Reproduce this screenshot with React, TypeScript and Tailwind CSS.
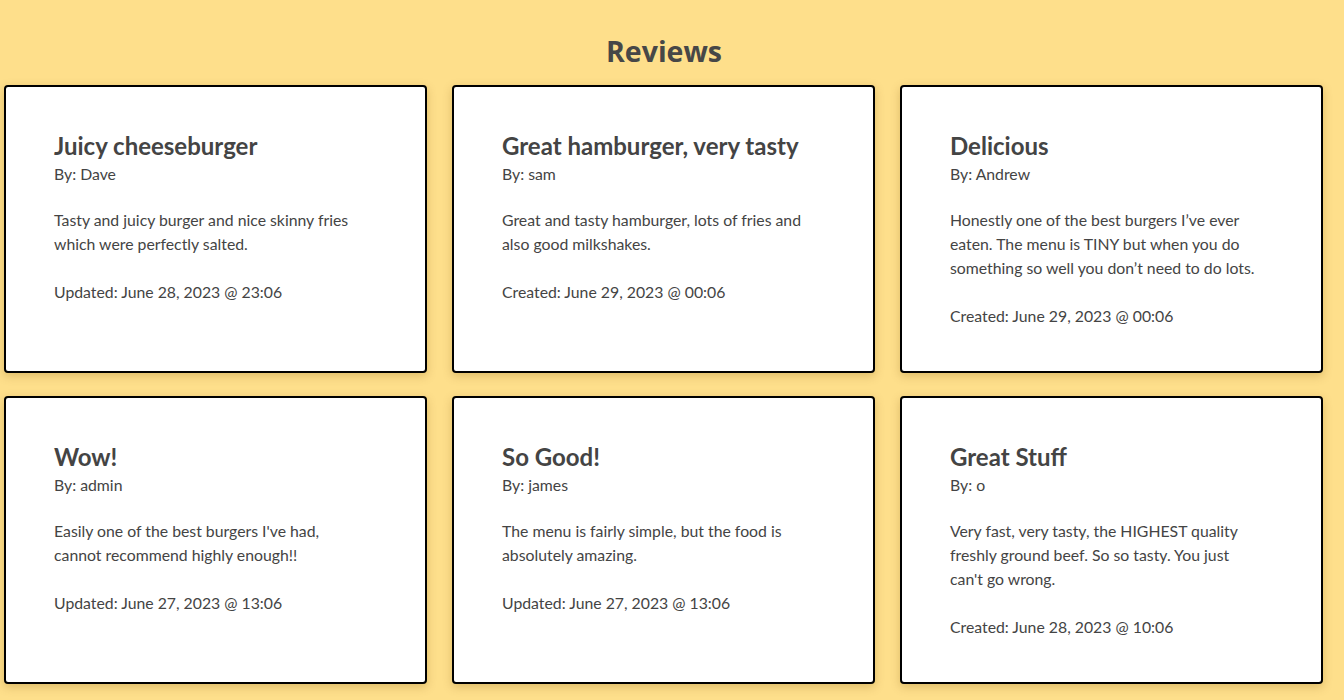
const reviews = [
  {
    title: "Juicy cheeseburger",
    author: "Dave",
    body: "Tasty and juicy burger and nice skinny fries which were perfectly salted.",
    stamp: "Updated: June 28, 2023 @ 23:06",
  },
  {
    title: "Great hamburger, very tasty",
    author: "sam",
    body: "Great and tasty hamburger, lots of fries and also good milkshakes.",
    stamp: "Created: June 29, 2023 @ 00:06",
  },
  {
    title: "Delicious",
    author: "Andrew",
    body: "Honestly one of the best burgers I’ve ever eaten. The menu is TINY but when you do something so well you don’t need to do lots.",
    stamp: "Created: June 29, 2023 @ 00:06",
  },
  {
    title: "Wow!",
    author: "admin",
    body: "Easily one of the best burgers I've had, cannot recommend highly enough!!",
    stamp: "Updated: June 27, 2023 @ 13:06",
  },
  {
    title: "So Good!",
    author: "james",
    body: "The menu is fairly simple, but the food is absolutely amazing.",
    stamp: "Updated: June 27, 2023 @ 13:06",
  },
  {
    title: "Great Stuff",
    author: "o",
    body: "Very fast, very tasty, the HIGHEST quality freshly ground beef. So so tasty. You just can't go wrong.",
    stamp: "Created: June 28, 2023 @ 10:06",
  },
];

export default function App() {
  return (
    <div className="min-h-screen w-full bg-[#fedf8b] pr-4 text-[#444] font-['Lato','Noto_Sans',sans-serif]">
      {/* Heading */}
      <h1 className="pt-[31px] pb-[14px] text-center text-[28.5px] leading-[40px] font-bold text-[#474747] font-['Open_Sans',sans-serif]">
        Reviews
      </h1>

      {/* Cards */}
      <div className="grid grid-cols-[repeat(3,423px)] gap-x-[25px] gap-y-[23px] pl-[4px] pb-[16px]">
        {reviews.map((r) => (
          <div
            key={r.title}
            className="bg-white border-2 border-black rounded-[4px] shadow-[0_3px_10px_rgba(120,80,0,0.25)] px-12 pt-[43px] pb-[43px]"
          >
            <h2 className="text-[24px] leading-[32px] font-bold text-[#444]">
              {r.title}
            </h2>
            <p className="text-[15.8px] leading-[24px]">By: {r.author}</p>
            <p className="mt-[22px] max-w-[310px] text-[15.8px] leading-[24px]">
              {r.body}
            </p>
            <p className="mt-[24px] text-[15.8px] leading-[24px]">{r.stamp}</p>
          </div>
        ))}
      </div>
    </div>
  );
}
